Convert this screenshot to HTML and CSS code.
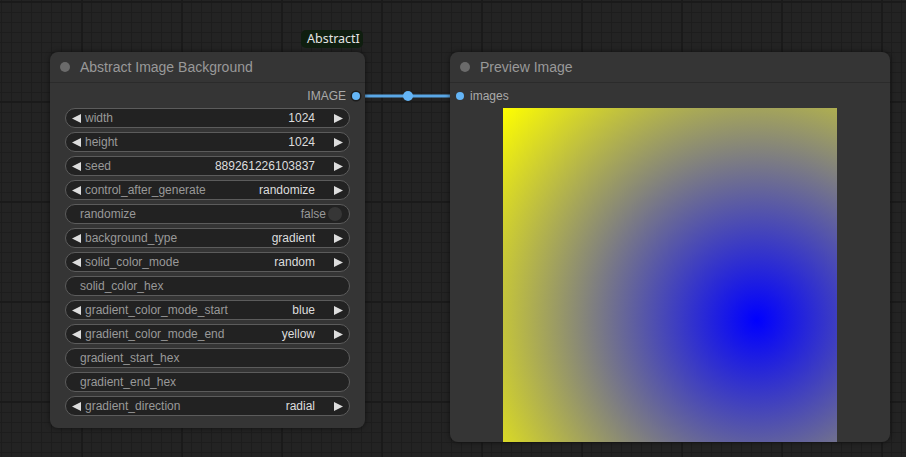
FILE: index.html
```html
<!DOCTYPE html>
<html>
<head>
<meta charset="utf-8">
<link rel="stylesheet" href="styles.css">
</head>
<body>
<div class="canvas">
  <svg class="link" width="906" height="457" viewBox="0 0 906 457">
    <line x1="356" y1="96" x2="460" y2="96" stroke="#5aa7e6" stroke-width="3"/>
    <circle cx="408" cy="96" r="5" fill="#64b5f6"/>
  </svg>

  <div class="badge">AbstractI</div>

  <div class="node node-left">
    <div class="node-title"><span class="title-dot"></span><span class="title-text">Abstract Image Background</span></div>
    <div class="node-body">
      <div class="slot-row slot-out"><span class="slot-label">IMAGE</span><span class="slot-dot ringed"></span></div>
      <div class="widgets">
        <div class="widget combo">
          <svg class="arr" viewBox="0 0 9 9"><path d="M9 0L0 4.5L9 9Z"/></svg>
          <span class="w-label">width</span><span class="w-value">1024</span>
          <svg class="arr arr-r" viewBox="0 0 9 9"><path d="M0 0L9 4.5L0 9Z"/></svg>
        </div>
        <div class="widget combo">
          <svg class="arr" viewBox="0 0 9 9"><path d="M9 0L0 4.5L9 9Z"/></svg>
          <span class="w-label">height</span><span class="w-value">1024</span>
          <svg class="arr arr-r" viewBox="0 0 9 9"><path d="M0 0L9 4.5L0 9Z"/></svg>
        </div>
        <div class="widget combo">
          <svg class="arr" viewBox="0 0 9 9"><path d="M9 0L0 4.5L9 9Z"/></svg>
          <span class="w-label">seed</span><span class="w-value">889261226103837</span>
          <svg class="arr arr-r" viewBox="0 0 9 9"><path d="M0 0L9 4.5L0 9Z"/></svg>
        </div>
        <div class="widget combo">
          <svg class="arr" viewBox="0 0 9 9"><path d="M9 0L0 4.5L9 9Z"/></svg>
          <span class="w-label">control_after_generate</span><span class="w-value">randomize</span>
          <svg class="arr arr-r" viewBox="0 0 9 9"><path d="M0 0L9 4.5L0 9Z"/></svg>
        </div>
        <div class="widget toggle">
          <span class="w-label">randomize</span><span class="w-value dim">false</span><span class="knob"></span>
        </div>
        <div class="widget combo">
          <svg class="arr" viewBox="0 0 9 9"><path d="M9 0L0 4.5L9 9Z"/></svg>
          <span class="w-label">background_type</span><span class="w-value">gradient</span>
          <svg class="arr arr-r" viewBox="0 0 9 9"><path d="M0 0L9 4.5L0 9Z"/></svg>
        </div>
        <div class="widget combo">
          <svg class="arr" viewBox="0 0 9 9"><path d="M9 0L0 4.5L9 9Z"/></svg>
          <span class="w-label">solid_color_mode</span><span class="w-value">random</span>
          <svg class="arr arr-r" viewBox="0 0 9 9"><path d="M0 0L9 4.5L0 9Z"/></svg>
        </div>
        <div class="widget text">
          <span class="w-label">solid_color_hex</span>
        </div>
        <div class="widget combo">
          <svg class="arr" viewBox="0 0 9 9"><path d="M9 0L0 4.5L9 9Z"/></svg>
          <span class="w-label">gradient_color_mode_start</span><span class="w-value">blue</span>
          <svg class="arr arr-r" viewBox="0 0 9 9"><path d="M0 0L9 4.5L0 9Z"/></svg>
        </div>
        <div class="widget combo">
          <svg class="arr" viewBox="0 0 9 9"><path d="M9 0L0 4.5L9 9Z"/></svg>
          <span class="w-label">gradient_color_mode_end</span><span class="w-value">yellow</span>
          <svg class="arr arr-r" viewBox="0 0 9 9"><path d="M0 0L9 4.5L0 9Z"/></svg>
        </div>
        <div class="widget text">
          <span class="w-label">gradient_start_hex</span>
        </div>
        <div class="widget text">
          <span class="w-label">gradient_end_hex</span>
        </div>
        <div class="widget combo">
          <svg class="arr" viewBox="0 0 9 9"><path d="M9 0L0 4.5L9 9Z"/></svg>
          <span class="w-label">gradient_direction</span><span class="w-value">radial</span>
          <svg class="arr arr-r" viewBox="0 0 9 9"><path d="M0 0L9 4.5L0 9Z"/></svg>
        </div>
      </div>
    </div>
  </div>

  <div class="node node-right">
    <div class="node-title"><span class="title-dot"></span><span class="title-text">Preview Image</span></div>
    <div class="node-body">
      <div class="slot-row slot-in"><span class="slot-dot"></span><span class="slot-label">images</span></div>
      <div class="preview-wrap"><div class="preview-img"></div></div>
    </div>
  </div>
</div>
</body>
</html>
```

FILE: styles.css
```css
html, body {
  margin: 0;
  padding: 0;
}
body {
  width: 906px;
  height: 457px;
  overflow: hidden;
  font-family: "Liberation Sans", Arial, sans-serif;
}
.canvas {
  position: relative;
  width: 906px;
  height: 457px;
  background-color: #232323;
  background-image:
    linear-gradient(to right, #1a1a1a 2px, transparent 2px),
    linear-gradient(to bottom, #1a1a1a 2px, transparent 2px),
    linear-gradient(to right, #1d1d1d 1px, transparent 1px),
    linear-gradient(to bottom, #1d1d1d 1px, transparent 1px);
  background-size: 100px 100px, 100px 100px, 10px 10px, 10px 10px;
  background-position: 81px 0, 0 101px, 1px 0, 0 2px;
}
.link {
  position: absolute;
  left: 0;
  top: 0;
  z-index: 0;
}
.badge {
  position: absolute;
  left: 301px;
  top: 30px;
  width: 62px;
  height: 18px;
  box-sizing: border-box;
  padding-left: 6px;
  background: #0f1e0f;
  border-radius: 5px;
  color: #e4e4e4;
  font: 12.5px/18px "Noto Sans", "DejaVu Sans", sans-serif;
  z-index: 2;
}
.node {
  position: absolute;
  z-index: 1;
  background: #353535;
  border-radius: 8px;
  box-shadow: 0 0 5px rgba(0, 0, 0, 0.55);
  display: flex;
  flex-direction: column;
  overflow: hidden;
}
.node-left {
  left: 50px;
  top: 52px;
  width: 315px;
}
.node-right {
  left: 450px;
  top: 52px;
  width: 440px;
}
.node-title {
  height: 30px;
  border-bottom: 1px solid #2b2b2b;
  display: flex;
  align-items: center;
  padding-left: 10px;
  gap: 10px;
}
.title-dot {
  width: 10px;
  height: 10px;
  border-radius: 50%;
  background: #6b6b6b;
}
.title-text {
  color: #999999;
  font-size: 14px;
}
.node-body {
  display: flex;
  flex-direction: column;
}
.slot-row {
  height: 25px;
  display: flex;
  align-items: center;
  font-size: 12px;
  color: #aaaaaa;
}
.slot-out {
  justify-content: flex-end;
  padding-right: 5px;
  gap: 6px;
}
.slot-in {
  padding-left: 6px;
  gap: 6px;
}
.slot-dot {
  width: 8px;
  height: 8px;
  border-radius: 50%;
  background: #64b5f6;
}
.slot-dot.ringed {
  box-shadow: 0 0 0 1.5px #1c1c1c;
}
.widgets {
  display: flex;
  flex-direction: column;
  gap: 4px;
  padding: 0 15px 12px 15px;
}
.widget {
  height: 20px;
  box-sizing: border-box;
  border: 1px solid #5c5c5c;
  border-radius: 10px;
  background: #222222;
  display: flex;
  align-items: center;
  font-size: 12px;
  line-height: 18px;
  white-space: nowrap;
}
.widget.combo {
  padding: 0 6px;
}
.widget.text {
  padding-left: 14px;
}
.widget.toggle {
  padding: 0 7px 0 14px;
}
.arr {
  width: 9px;
  height: 9px;
  fill: #dddddd;
  flex: none;
}
.combo .w-label {
  margin-left: 4px;
}
.arr-r {
  margin-left: 19px;
}
.w-label {
  color: #999999;
}
.w-value {
  flex: 1;
  text-align: right;
  color: #dddddd;
}
.w-value.dim {
  color: #999999;
}
.knob {
  width: 14px;
  height: 14px;
  border-radius: 50%;
  background: #363636;
  margin-left: 2px;
  flex: none;
}
.preview-wrap {
  display: flex;
  justify-content: center;
}
.preview-img {
  width: 334px;
  height: 334px;
  background: radial-gradient(circle farthest-corner at 76% 63.5%, #0000ff 0%, #ffff00 100%);
}
```
